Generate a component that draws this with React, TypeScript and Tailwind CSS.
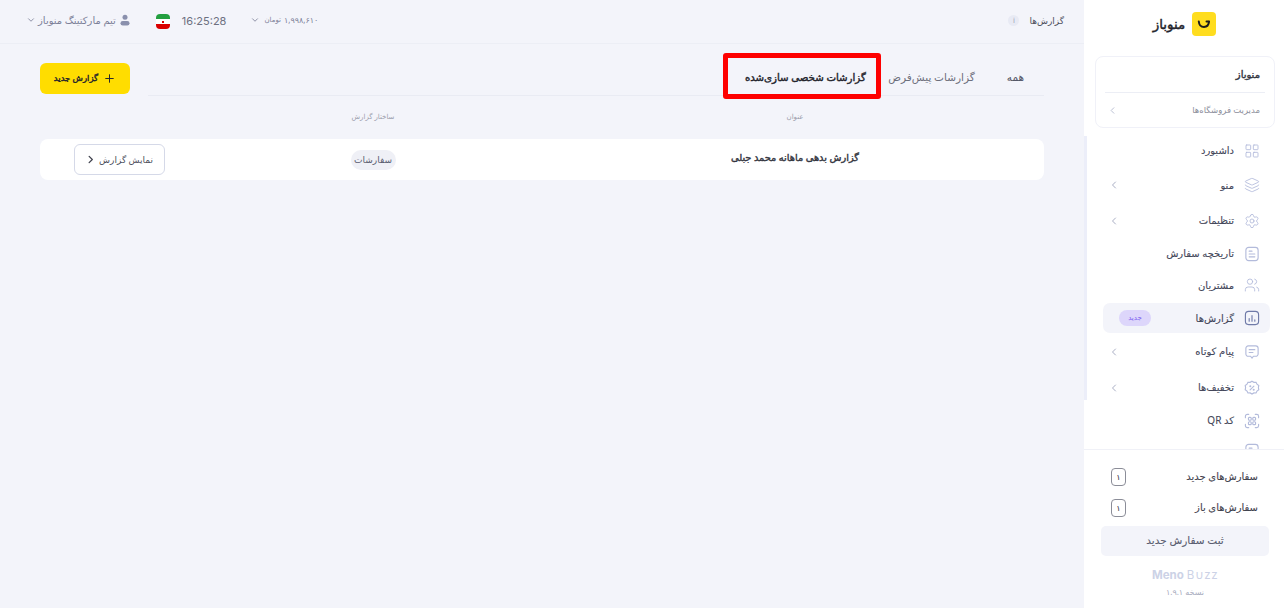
import { ChevronLeft, ChevronDown, Plus, Layers, Settings, Users, LayoutGrid } from "lucide-react";

const iconCls = "w-[16px] h-[16px] text-[#b3bbdb] shrink-0";
const semi = "[-webkit-text-stroke:0.1px_currentColor]";
const heavy = "[-webkit-text-stroke:0.4px_currentColor]";

function ReportIcon() {
  return (
    <svg viewBox="0 0 17 17" className="w-[16px] h-[16px] shrink-0" fill="none" stroke="#6f7aa8" strokeWidth="1.2" strokeLinecap="round">
      <rect x="1.5" y="1.5" width="14" height="14" rx="3.5" />
      <path d="M5.5 9v3M8.5 6v6M11.5 10.5V12" />
    </svg>
  );
}

function HistoryIcon() {
  return (
    <svg viewBox="0 0 17 17" className={iconCls} fill="none" stroke="currentColor" strokeWidth="1.2" strokeLinecap="round">
      <rect x="2" y="1.5" width="13" height="14" rx="3" />
      <path d="M5.5 5.5h3M5.5 8.5h6M5.5 11.5h6" />
    </svg>
  );
}

function MessageIcon() {
  return (
    <svg viewBox="0 0 17 17" className={iconCls} fill="none" stroke="currentColor" strokeWidth="1.2" strokeLinecap="round" strokeLinejoin="round">
      <path d="M4.5 2h8A2.5 2.5 0 0 1 15 4.5v6a2.5 2.5 0 0 1-2.5 2.5H10l-1.5 2L7 13H4.500A2.500 2.500 0 0 1 2 10.500v-6A2.500 2.500 0 0 1 4.500 2z" />
      <path d="M5.500 6h6M5.500 9h4" />
    </svg>
  );
}

function DiscountIcon() {
  return (
    <svg viewBox="0 0 17 17" className={iconCls} fill="none" stroke="currentColor" strokeWidth="1.2" strokeLinecap="round">
      <path d="M8.500 1.300l2 1.200 2.300-.1 1 2.100 1.900 1.300-.4 2.300.4 2.300-1.900 1.300-1 2.100-2.300-.1-2 1.200-2-1.200-2.300.1-1-2.100-1.900-1.300.4-2.300-.4-2.300 1.900-1.300 1-2.100 2.300.1z" />
      <path d="M10.500 6.500l-4 4" />
      <circle cx="6.700" cy="6.700" r=".5" />
      <circle cx="10.300" cy="10.300" r=".5" />
    </svg>
  );
}

function QrIcon() {
  return (
    <svg viewBox="0 0 17 17" className={iconCls} fill="none" stroke="currentColor" strokeWidth="1.2" strokeLinecap="round">
      <path d="M1.500 5V3.500a2 2 0 0 1 2-2H5M12 1.500h1.500a2 2 0 0 1 2 2V5M15.500 12v1.500a2 2 0 0 1-2 2H12M5 15.500H3.500a2 2 0 0 1-2-2V12" />
      <rect x="4.700" y="4.700" width="3" height="3" rx="1" />
      <rect x="9.300" y="4.700" width="3" height="3" rx="1" />
      <rect x="4.700" y="9.300" width="3" height="3" rx="1" />
      <rect x="9.300" y="9.300" width="3" height="3" rx="1" />
    </svg>
  );
}

function MenuRow({ label, icon, arrow, h }: { label: string; icon: React.ReactNode; arrow?: boolean; h: string }) {
  return (
    <div className={`flex items-center justify-between pr-[24px] pl-[24px] ${h}`}>
      <div className="flex items-center gap-[10px]">
        {icon}
        <span className={`text-[10px] text-[#44475a] ${semi}`}>{label}</span>
      </div>
      {arrow && <ChevronLeft className="w-[12px] h-[12px] text-[#a9aec4]" />}
    </div>
  );
}

function Sidebar() {
  return (
    <aside className="w-[200px] h-[608px] bg-white flex flex-col shrink-0 overflow-hidden">
      <div className="h-[56px] pb-[8px] flex items-center justify-center gap-[7px] pl-[1px]">
        <div className="w-6 h-6 rounded-[4px] bg-[#ffdd1f] flex items-center justify-center">
          <svg viewBox="0 0 16 16" className="w-[16px] h-[16px]" fill="none" stroke="#1c1c1c" strokeWidth="2" strokeLinecap="round">
            <path d="M2.800 5.500c.3 3.500 2.500 5.500 5.200 5.500s4.700-2 5-5.300" />
            <path d="M10.500 5.500h2.500" />
          </svg>
        </div>
        <span className={`text-[13.500px] text-[#23242c] ${heavy}`}>منوباز</span>
      </div>
      <div className="ml-[11px] mr-[9px] h-[72px] rounded-[8px] border border-[#f0f1f8] px-[9px] flex flex-col">
        <div className={`h-[36px] flex items-center pr-[5px] border-b border-[#eceef5] text-[10px] text-[#34363f] ${heavy}`}>منوباز</div>
        <div className="flex-1 flex items-center justify-between pl-[2px] pr-[5px] text-[8.500px] text-[#8d8f9c]">
          <span>مدیریت فروشگاه‌ها</span>
          <ChevronLeft className="w-[11px] h-[11px] text-[#b6bbd0]" />
        </div>
      </div>
      <div className="relative h-[313px] mt-[8px] overflow-hidden">
        <div className="absolute left-0 top-0 w-[3px] h-[264px] bg-[#eceef9]" />
        <MenuRow h="h-[29px]" label="داشبورد" icon={<LayoutGrid className={iconCls} strokeWidth={1.3} />} />
        <MenuRow h="h-[40px]" label="منو" arrow icon={<Layers className={iconCls} strokeWidth={1.3} />} />
        <MenuRow h="h-[31px]" label="تنظیمات" arrow icon={<Settings className={iconCls} strokeWidth={1.3} />} />
        <MenuRow h="h-[35px]" label="تاریخچه سفارش" icon={<HistoryIcon />} />
        <MenuRow h="h-[28px]" label="مشتریان" icon={<Users className={iconCls} strokeWidth={1.3} />} />
        <div className="mr-[14px] ml-[19px] mt-[4px] h-[30px] rounded-[7px] bg-[#f3f4fa] flex items-center justify-between pr-[10px] pl-[16px]">
          <div className="flex items-center gap-[10px]">
            <ReportIcon />
            <span className={`text-[10px] text-[#44475a] ${semi}`}>گزارش‌ها</span>
          </div>
          <span className="w-8 h-4 rounded-full bg-[#ddd6fb] text-[#7c5ff0] text-[7px] flex items-center justify-center">جدید</span>
        </div>
        <MenuRow h="h-[37px]" label="پیام کوتاه" arrow icon={<MessageIcon />} />
        <MenuRow h="h-[35px]" label="تخفیف‌ها" arrow icon={<DiscountIcon />} />
        <MenuRow h="h-[31px]" label="کد QR" icon={<QrIcon />} />
        <MenuRow h="h-[30px]" label="" icon={<HistoryIcon />} />
      </div>
      <div className="relative flex-1 border-t border-[#f0f1f7] bg-white flex flex-col pr-[15px] pl-[17px]">
        <div className={`h-[31px] mt-[11px] flex items-center justify-between pr-[11px] pl-[10px] text-[10px] text-[#3f414d] ${semi}`}>
          <span>سفارش‌های جدید</span>
          <span className="w-[15px] h-[18px] rounded-[4px] border border-[#8b8d98] text-[8px] flex items-center justify-center">۱</span>
        </div>
        <div className={`h-[31px] flex items-center justify-between pr-[11px] pl-[10px] text-[10px] text-[#3f414d] ${semi}`}>
          <span>سفارش‌های باز</span>
          <span className="w-[15px] h-[18px] rounded-[4px] border border-[#8b8d98] text-[8px] flex items-center justify-center">۱</span>
        </div>
        <div className={`mt-[3px] h-[30px] rounded-[5px] bg-[#f3f4fa] flex items-center justify-center text-[10.500px] text-[#5a5d70] ${semi}`}>ثبت سفارش جدید</div>
        <div className="mt-[12px] flex justify-center items-center gap-[3px] h-[16px]" dir="ltr">
          <span className="text-[11.500px] font-bold text-[#ccd2e6] font-['Inter',sans-serif]">Meno</span>
          <span className="text-[11.500px] text-[#ccd2e6] tracking-[0.5px] font-['Inter',sans-serif]">B∪zz</span>
        </div>
        <div className="mt-[2px] text-center text-[8px] text-[#a7abbd]">نسخه ۱.۹.۱</div>
      </div>
    </aside>
  );
}

function Header() {
  return (
    <header className="h-[44px] border-b border-[#eceef5] flex items-center justify-between pr-[20px] pl-[26px] shrink-0">
      <div className="flex items-center gap-[10px] text-[9px] text-[#4d4f5c] pb-[2px]">
        <span>گزارش‌ها</span>
        <span className="w-[11px] h-[11px] rounded-full bg-[#e8eaf4] text-[6px] text-[#8b8fa8] flex items-center justify-center font-['Inter',sans-serif]">i</span>
      </div>
      <div className="flex items-center">
        <div className="flex items-center gap-[3px] text-[7px] text-[#7c8098] pb-[3px]">
          <span className="text-[8px]">۱,۹۹۸,۶۱۰</span>
          <span>تومان</span>
          <ChevronDown className="w-[10px] h-[10px] mr-[1px]" />
        </div>
        <span className="mr-[24px] text-[11px] text-[#6d7080] font-['Inter',sans-serif]">16:25:28</span>
        <div className="mr-[12px] w-[14px] h-[15px] rounded-[4px] overflow-hidden flex flex-col">
          <div className="h-[5px] bg-[#239f40]" />
          <div className="h-[5px] bg-white flex items-center justify-center"><div className="w-[2px] h-[2px] bg-[#da0000]" /></div>
          <div className="h-[5px] bg-[#da0000]" />
        </div>
        <div className="mr-[25px] flex items-center gap-[2px] text-[10px] text-[#7c8098] pb-[3px]">
          <svg viewBox="0 0 12 12" className="w-[12px] h-[12px] ml-[1px]" fill="#8a90ad">
            <circle cx="6" cy="3.200" r="2.500" />
            <rect x="1.500" y="7" width="9" height="4.500" rx="2.200" />
          </svg>
          <span>تیم مارکتینگ منوباز</span>
          <ChevronDown className="w-[10px] h-[10px]" />
        </div>
      </div>
    </header>
  );
}

function Content() {
  return (
    <main className="flex-1 px-[40px]">
      <div className="flex items-start justify-between">
        <div className="flex-1 h-[52px] pt-[9px] flex items-start border-b border-[#e9ebf3] ml-[18px]">
          <div className="h-[50px] flex items-center pr-[20px] text-[10.500px] text-[#555767]">همه</div>
          <div className="h-[50px] flex items-center pr-[32px] pl-[7px] text-[10.500px] text-[#6c6e7b] whitespace-nowrap">گزارشات پیش‌فرض</div>
          <div className={`w-[158px] h-[46px] border-[5px] border-[#fe0000] rounded-[3px] flex items-center justify-center pl-[6px] pt-[3px] text-[10.200px] text-[#23242c] whitespace-nowrap ${heavy}`}>گزارشات شخصی سازی‌شده</div>
        </div>
        <button className={`mt-[19px] w-[90px] h-[31px] rounded-[6px] bg-[#ffdd00] flex items-center justify-center gap-[5px] text-[8.500px] text-[#23242c] ${heavy}`}>
          <Plus className="w-[13px] h-[13px]" strokeWidth={1.8} />
          گزارش جدید
        </button>
      </div>
      <div className="mt-[15px] h-[12px] grid grid-cols-[498px_346px_160px] items-center text-[7px] text-[#9a9cab] text-center">
        <span>عنوان</span>
        <span>ساختار گزارش</span>
      </div>
      <div className="mt-[16px] h-[41px] rounded-[8px] bg-white grid grid-cols-[498px_346px_160px] items-center">
        <span className={`text-center text-[9.800px] text-[#34363f] pb-[2px] ${heavy}`}>گزارش بدهی ماهانه محمد جبلی</span>
        <div className="flex justify-center">
          <span className="w-[45px] h-[20px] rounded-full bg-[#eff0f6] text-[9px] text-[#5a5d70] flex items-center justify-center">سفارشات</span>
        </div>
        <div className="flex justify-center">
          <button className="mr-[1px] w-[91px] h-[31px] rounded-[6px] border border-[#d5d9e8] flex items-center justify-center gap-[4px] text-[9px] text-[#4d4f5c]">
            نمایش گزارش
            <svg viewBox="0 0 10 10" className="w-[9px] h-[9px]" fill="none" stroke="#3f414d" strokeWidth="1.400" strokeLinecap="round" strokeLinejoin="round">
              <path d="M3.500 1.500L7 5l-3.500 3.500" />
            </svg>
          </button>
        </div>
      </div>
    </main>
  );
}

export default function App() {
  return (
    <div dir="rtl" className="w-[1284px] h-[608px] flex bg-[#f3f4fa] overflow-hidden font-['Noto_Sans','DejaVu_Sans',sans-serif]">
      <Sidebar />
      <div className="flex-1 flex flex-col min-w-0">
        <Header />
        <Content />
      </div>
    </div>
  );
}
